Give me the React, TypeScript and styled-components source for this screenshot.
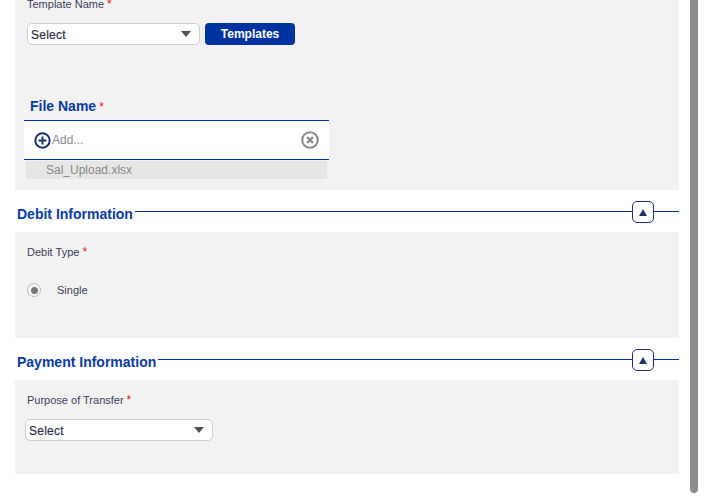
import React from "react";
import styled, { createGlobalStyle } from "styled-components";

const Global = createGlobalStyle`
  html, body { margin: 0; padding: 0; background: #fff; height: 500px; overflow: hidden; }
  body { font-family: "Liberation Sans", Arial, sans-serif; color: #3a3a55; }
`;

const Page = styled.div`
  display: flex;
  align-items: flex-start;
  width: 704px;
  height: 500px;
  overflow: hidden;
`;
const Main = styled.main`
  width: 664px;
  margin-left: 15px;
  margin-top: -10px;
  flex: none;
`;
const Scrollbar = styled.div`
  width: 8px;
  height: 503px;
  margin-top: -10px;
  margin-left: 11px;
  background: #8c8c8c;
  border-radius: 0 0 4px 4px;
  flex: none;
`;
const Panel = styled.section<{ $height: number }>`
  height: ${(p) => p.$height}px;
  background: #f2f2f2;
  box-sizing: border-box;
  position: relative;
  display: flex;
  flex-direction: column;
  align-items: flex-start;
  padding: 0 12px;
`;
const Label = styled.label<{ $top: number }>`
  font-size: 11px;
  line-height: 14px;
  margin-top: ${(p) => p.$top}px;
  color: #3f3f5c;
`;
const Star = styled.span`
  color: #f01414;
  margin-left: 3px;
  font-size: 12px;
`;
const Row = styled.div`
  display: flex;
  gap: 5px;
  margin-top: 12px;
`;
const SelectBox = styled.div<{ $width: number; $shift?: number }>`
  width: ${(p) => p.$width}px;
  height: 22px;
  box-sizing: border-box;
  margin-left: ${(p) => p.$shift ?? 0}px;
  background: #fff;
  border: 1px solid #cfcfcf;
  border-radius: 5px;
  display: flex;
  align-items: center;
  justify-content: space-between;
  padding: 2px 8px 0 3px;
  font-size: 12px;
  color: #2e2e4a;
  letter-spacing: 0.02em;
  -webkit-text-stroke: 0.2px #2e2e4a;
`;
const Caret = styled.span`
  width: 0;
  height: 0;
  margin-top: -2px;
  border-left: 5px solid transparent;
  border-right: 5px solid transparent;
  border-top: 6px solid #4d4d55;
`;
const TemplatesButton = styled.button`
  width: 90px;
  height: 22px;
  padding: 0;
  border: 0;
  border-radius: 4px;
  background: #0033a0;
  color: #fff;
  font: bold 12px "Liberation Sans", Arial, sans-serif;
`;
const FileTitle = styled.h3`
  margin: 53px 0 0 3px;
  font-size: 14px;
  line-height: 16px;
  font-weight: bold;
  color: #0a3ba5;
`;
const FileStar = styled.span`
  color: #f01414;
  font-size: 12px;
  font-weight: normal;
  margin-left: 3px;
`;
const AddBar = styled.div`
  width: 305px;
  height: 40px;
  margin: 5px 0 0 -3px;
  box-sizing: border-box;
  background: #fff;
  border-top: 1px solid #0033a0;
  border-bottom: 1px solid #0033a0;
  display: flex;
  align-items: center;
  padding: 0 10px 0 10px;
`;
const AddText = styled.span`
  flex: 1;
  font-size: 12px;
  color: #8a8a8a;
`;
const FileItem = styled.div`
  width: 301px;
  height: 18px;
  margin: 1px 0 0 -1px;
  box-sizing: border-box;
  padding-left: 20px;
  background: #e6e6e6;
  color: #8a8a8a;
  font-size: 12px;
  line-height: 18px;
`;
const SectionHeader = styled.header`
  height: 42px;
  display: flex;
  align-items: flex-start;
  position: relative;
  background: #fff;
`;
const SectionTitle = styled.h2`
  margin: 16px 2px 0 2px;
  font-size: 14px;
  line-height: 16px;
  font-weight: bold;
  color: #0a3ba5;
  white-space: nowrap;
`;
const Rule = styled.div`
  flex: 1;
  height: 1px;
  margin-top: 21px;
  background: #0033a0;
`;
const Collapse = styled.button`
  width: 22px;
  height: 22px;
  margin: 11px 0 0 0;
  box-sizing: border-box;
  padding: 0;
  border: 1.5px solid #1f2f70;
  border-radius: 5px;
  background: #fff;
  display: flex;
  align-items: center;
  justify-content: center;
  flex: none;
`;
const Tail = styled.div`
  width: 25px;
  height: 1px;
  margin-top: 21px;
  background: #0033a0;
  flex: none;
`;
const RadioRow = styled.div`
  display: flex;
  align-items: center;
  margin-top: 24px;
  font-size: 11px;
  color: #3f3f5c;
`;
const RadioOuter = styled.span`
  width: 14px;
  height: 14px;
  box-sizing: border-box;
  border: 1px solid #bcbcbc;
  border-radius: 50%;
  background: #f6f6f6;
  display: flex;
  align-items: center;
  justify-content: center;
  margin-right: 16px;
`;
const RadioDot = styled.span`
  width: 7px;
  height: 7px;
  border-radius: 50%;
  background: #777;
`;

function Section({ title }: { title: string }) {
  return (
    <SectionHeader>
      <SectionTitle>{title}</SectionTitle>
      <Rule />
      <Collapse aria-label="Collapse">
        <svg width="8" height="7" viewBox="0 0 8 7"><path d="M4 0L8 7H0Z" fill="#1f2f70" /></svg>
      </Collapse>
      <Tail />
    </SectionHeader>
  );
}

export default function App() {
  return (
    <Page>
      <Global />
      <Main>
        <Panel $height={200}>
          <Label $top={7}>Template Name<Star>*</Star></Label>
          <Row>
            <SelectBox $width={173}>Select<Caret /></SelectBox>
            <TemplatesButton>Templates</TemplatesButton>
          </Row>
          <FileTitle>File Name<FileStar>*</FileStar></FileTitle>
          <AddBar>
            <svg width="17" height="17" viewBox="0 0 17 17" style={{ marginRight: 1 }}>
              <circle cx="8.5" cy="8.5" r="7.2" fill="none" stroke="#16306e" strokeWidth="2" />
              <path d="M8.5 4.5v8M4.5 8.5h8" stroke="#16306e" strokeWidth="2" />
            </svg>
            <AddText>Add...</AddText>
            <svg width="18" height="18" viewBox="0 0 18 18">
              <circle cx="9" cy="9" r="7.8" fill="none" stroke="#8c8c8c" strokeWidth="2" />
              <path d="M6 6l6 6M12 6l-6 6" stroke="#8c8c8c" strokeWidth="2.4" />
            </svg>
          </AddBar>
          <FileItem>Sal_Upload.xlsx</FileItem>
        </Panel>
        <Section title="Debit Information" />
        <Panel $height={106}>
          <Label $top={13}>Debit Type<Star>*</Star></Label>
          <RadioRow>
            <RadioOuter><RadioDot /></RadioOuter>
            Single
          </RadioRow>
        </Panel>
        <Section title="Payment Information" />
        <Panel $height={94}>
          <Label $top={13}>Purpose of Transfer<Star>*</Star></Label>
          <Row>
            <SelectBox $width={188} $shift={-2}>Select<Caret /></SelectBox>
          </Row>
        </Panel>
      </Main>
      <Scrollbar />
    </Page>
  );
}
